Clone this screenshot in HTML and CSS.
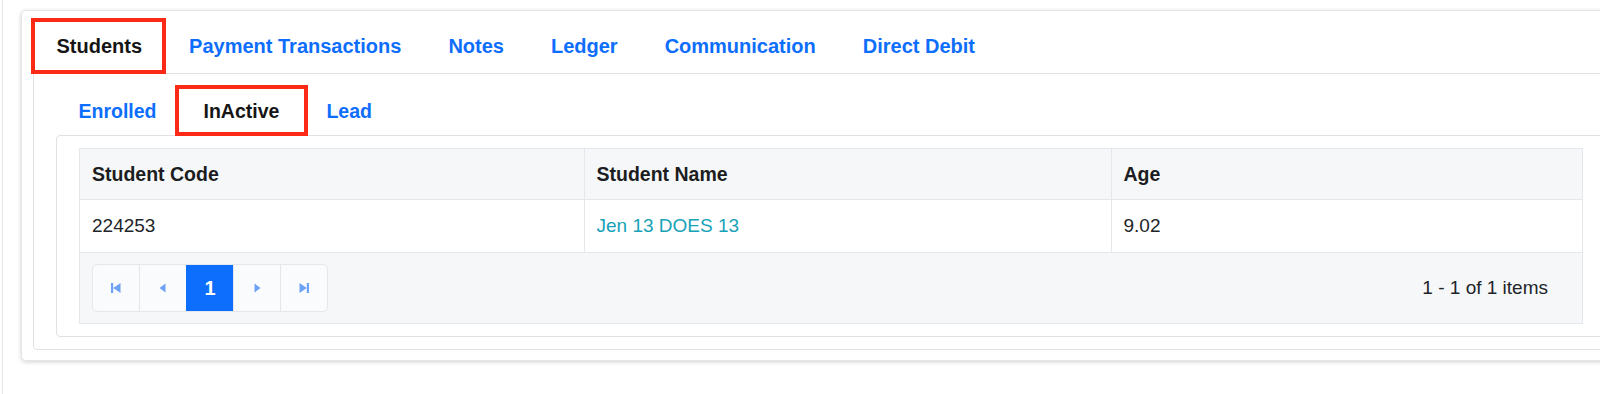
FILE: index.html
```html
<!DOCTYPE html>
<html>
<head>
	<meta charset="UTF-8">
	<title>Students</title>
	<link rel="stylesheet" href="styles.css">
</head>
<body>
	<div class="page">
		<div class="card">
			<ul class="tabs">
				<li class="tab active marked marked-main">Students</li>
				<li class="tab">Payment Transactions</li>
				<li class="tab">Notes</li>
				<li class="tab">Ledger</li>
				<li class="tab">Communication</li>
				<li class="tab">Direct Debit</li>
			</ul>
			<div class="tab-content">
				<ul class="tabs sub">
					<li class="tab">Enrolled</li>
					<li class="tab active marked marked-sub">InActive</li>
					<li class="tab">Lead</li>
				</ul>
				<div class="pane">
					<div class="grid">
						<table>
							<colgroup>
								<col style="width: 504px">
								<col style="width: 527px">
								<col>
							</colgroup>
							<thead>
								<tr>
									<th>Student Code</th>
									<th>Student Name</th>
									<th>Age</th>
								</tr>
							</thead>
							<tbody>
								<tr>
									<td>224253</td>
									<td><a class="name-link" href="#">Jen 13 DOES 13</a></td>
									<td>9.02</td>
								</tr>
							</tbody>
						</table>
						<div class="pager">
							<div class="pager-buttons">
								<span class="pg-btn">
									<svg width="14" height="14" viewBox="0 0 14 14"><rect x="2" y="2" width="2.2" height="10" fill="currentColor"/><polygon points="11.5,2 11.5,12 4.2,7" fill="currentColor"/></svg>
								</span>
								<span class="pg-btn">
									<svg width="14" height="14" viewBox="0 0 14 14"><polygon points="9.5,2.5 9.5,11.5 3.5,7" fill="currentColor"/></svg>
								</span>
								<span class="pg-btn current">1</span>
								<span class="pg-btn">
									<svg width="14" height="14" viewBox="0 0 14 14"><polygon points="4.5,2.5 4.5,11.5 10.5,7" fill="currentColor"/></svg>
								</span>
								<span class="pg-btn">
									<svg width="14" height="14" viewBox="0 0 14 14"><polygon points="2.5,2 2.5,12 9.8,7" fill="currentColor"/><rect x="9.8" y="2" width="2.2" height="10" fill="currentColor"/></svg>
								</span>
							</div>
							<span class="pager-info">1 - 1 of 1 items</span>
						</div>
					</div>
				</div>
			</div>
		</div>
	</div>
</body>
</html>
```

FILE: styles.css
```css
html, body {
	overflow: hidden;
}

body {
	margin: 0;
	background-color: #fff;
	font-family: "Liberation Sans", Arial, sans-serif;
	color: #212529;
}

.page {
	margin-left: 2px;
	min-height: 394px;
	padding: 10px 0 0 18px;
	border-left: 1px solid #e4e4e4;
	box-sizing: border-box;
}

.card {
	width: 1620px;
	box-sizing: border-box;
	padding: 8px 11px 10px;
	border: 1px solid #e6e6e6;
	border-radius: 5px;
	background-color: #fff;
	box-shadow: 0 1px 4px rgba(0, 0, 0, 0.18);
}

.tabs {
	display: flex;
	margin: 0;
	padding: 0;
	list-style: none;
}

.tab {
	position: relative;
	padding: 15px 23.5px;
	font-size: 20px;
	line-height: 24px;
	font-weight: bold;
	color: #0d6efd;
}

.tabs.sub {
	margin-left: -1px;
}

.tabs.sub .tab {
	padding: 12px 23.5px;
	font-size: 19.5px;
}

.tab.active {
	color: #151515;
}

/* red callout boxes */
.marked::after {
	content: "";
	position: absolute;
	border: 4px solid #fa2a16;
}

.marked-main::after {
	top: -1px;
	bottom: -1px;
	left: -2px;
	right: 0;
}

.marked-sub::after {
	top: -2px;
	bottom: -1px;
	left: -5px;
	right: -5px;
}

.tab-content {
	padding: 13px 22px 12px;
	border: 1px solid #dee2e6;
	border-radius: 0 0 4px 4px;
}

.pane {
	padding: 12px 22px 12px 22px;
	border: 1px solid #dee2e6;
	border-radius: 4px;
}

.grid {
	border: 1px solid #e4e7eb;
	background-color: #f6f7f9;
}

.grid table {
	width: 100%;
	border-collapse: collapse;
	table-layout: fixed;
}

.grid th {
	padding: 13px 12px;
	font-size: 19.5px;
	line-height: 24px;
	font-weight: bold;
	text-align: left;
	color: #1b1d20;
	background-color: #f6f7f9;
	border-left: 1px solid #e4e7eb;
	border-bottom: 1px solid #e4e7eb;
}

.grid td {
	padding: 14px 12px;
	font-size: 19px;
	line-height: 24px;
	background-color: #fff;
	border-left: 1px solid #e4e7eb;
	border-bottom: 1px solid #e4e7eb;
}

.grid th:first-child, .grid td:first-child {
	border-left: none;
}

.name-link {
	color: #17a2b8;
	text-decoration: none;
}

.pager {
	display: flex;
	align-items: center;
	justify-content: space-between;
	padding: 11px 34px 11px 12px;
}

.pager-buttons {
	display: flex;
	border: 1px solid #e4e7eb;
	border-radius: 5px;
	background-color: #fafbfc;
	overflow: hidden;
}

.pg-btn {
	display: flex;
	align-items: center;
	justify-content: center;
	width: 46px;
	height: 46px;
	color: #6ea2f7;
	border-left: 1px solid #e4e7eb;
}

.pg-btn:first-child {
	border-left: none;
}

.pg-btn.current {
	background-color: #0d6efd;
	color: #fff;
	font-size: 20px;
	font-weight: bold;
	border-left-color: #0d6efd;
}

.pager-info {
	font-size: 19px;
	color: #212529;
}
```
